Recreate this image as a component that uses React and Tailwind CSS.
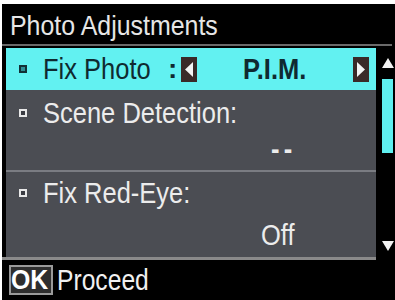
/** Photo Adjustments printer LCD screen */

import React from "react";

const font = { fontFamily: '"Liberation Sans", Arial, sans-serif' };

// Narrow text: the panel font is condensed, so squeeze Liberation Sans horizontally
const Narrow = ({ children, className = "" }) => (
    <span className={`inline-block origin-left scale-x-[0.85] whitespace-nowrap ${className}`}>{children}</span>
);

const Bullet = ({ dark }) => (
    <span className={`w-[8px] h-[8px] border-2 shrink-0 ${dark ? "border-[#123036] bg-[#2f8f95]" : "border-[#e8e8e8] bg-[#3a3c42]"}`}></span>
);

const ArrowBox = ({ dir }) => (
    <span className="w-[16px] h-[25px] bg-[#3a2a28] flex items-center justify-center">
        <svg width="10" height="17" viewBox="0 0 10 17">
            {dir === "left"
                ? <polygon points="9,1 9,16 1,8.5" fill="#f4f4f4" />
                : <polygon points="1,1 1,16 9,8.5" fill="#f4f4f4" />}
        </svg>
    </span>
);

const App = () => {
    return (
        <div className="w-[395px] h-[300px] bg-white pt-[4px] pl-[2px] overflow-hidden" style={font}>
            <div className="bg-black h-full flex flex-col">
                {/* Title */}
                <div className="h-[40px] flex items-center pl-[8px] pt-[3px] text-[#e6e6e6] text-[28px] leading-none">
                    <Narrow className="scale-x-[0.89]">Photo Adjustments</Narrow>
                </div>
                <div className="h-[2px] bg-[#6a6a6a] mr-[3px]"></div>

                {/* Menu + scrollbar */}
                <div className="flex h-[211px] pt-[2px]">
                    <div className="w-[370px] ml-[4px] flex flex-col">
                        {/* Selected row */}
                        <div className="h-[42px] bg-[#62f1f1] flex items-center pl-[13px] text-[#0f2a30] text-[30px] leading-none">
                            <Bullet dark />
                            <Narrow className="ml-[16px] w-[123px]">Fix Photo</Narrow>
                            <span className="ml-[2px] text-[28px] font-bold">:</span>
                            <span className="ml-[4px]"><ArrowBox dir="left" /></span>
                            <Narrow className="ml-[46px] w-[104px] font-bold">P.I.M.</Narrow>
                            <span className="ml-[6px]"><ArrowBox dir="right" /></span>
                        </div>
                        {/* Scene detection */}
                        <div className="h-[80px] bg-[#4b4d53] flex flex-col text-[#ececec] text-[30px] leading-none">
                            <div className="flex items-center pl-[13px] pt-[8px]">
                                <Bullet />
                                <Narrow className="ml-[16px]">Scene Detection:</Narrow>
                            </div>
                            <div className="pl-[265px] pt-[6px]">
                                <Narrow className="font-bold tracking-[5px]">--</Narrow>
                            </div>
                        </div>
                        <div className="h-[2px] bg-[#7a7c82]"></div>
                        {/* Fix red-eye */}
                        <div className="flex-1 bg-[#4b4d53] flex flex-col text-[#ececec] text-[30px] leading-none">
                            <div className="flex items-center pl-[13px] pt-[6px]">
                                <Bullet />
                                <Narrow className="ml-[16px]">Fix Red-Eye:</Narrow>
                            </div>
                            <div className="pl-[255px] pt-[12px]">
                                <Narrow>Off</Narrow>
                            </div>
                        </div>
                    </div>
                    {/* Scrollbar */}
                    <div className="flex-1 flex flex-col items-center pl-[4px] pt-[10px]">
                        <svg width="12" height="10" viewBox="0 0 12 10">
                            <polygon points="6,0 12,10 0,10" fill="#f2f2f2" />
                        </svg>
                        <div className="w-[11px] h-[74px] bg-[#5ff0f0] mt-[11px]"></div>
                        <div className="flex-1"></div>
                        <svg width="12" height="10" viewBox="0 0 12 10" className="mb-[6px]">
                            <polygon points="0,0 12,0 6,10" fill="#f2f2f2" />
                        </svg>
                    </div>
                </div>
                <div className="h-[3px] bg-[#8a8a8a] w-[374px]"></div>

                {/* Footer */}
                <div className="flex-1 flex items-center pl-[7px] gap-[4px]">
                    <span className="h-[30px] w-[44px] border-2 border-[#9a9a9a] bg-[#2e2e2e] text-white text-[27px] font-bold leading-none flex items-center justify-center">
                        <Narrow className="scale-x-[0.92]">OK</Narrow>
                    </span>
                    <Narrow className="text-[#f0f0f0] text-[29px] leading-none">Proceed</Narrow>
                </div>
            </div>
        </div>
    );
};

export default App;
